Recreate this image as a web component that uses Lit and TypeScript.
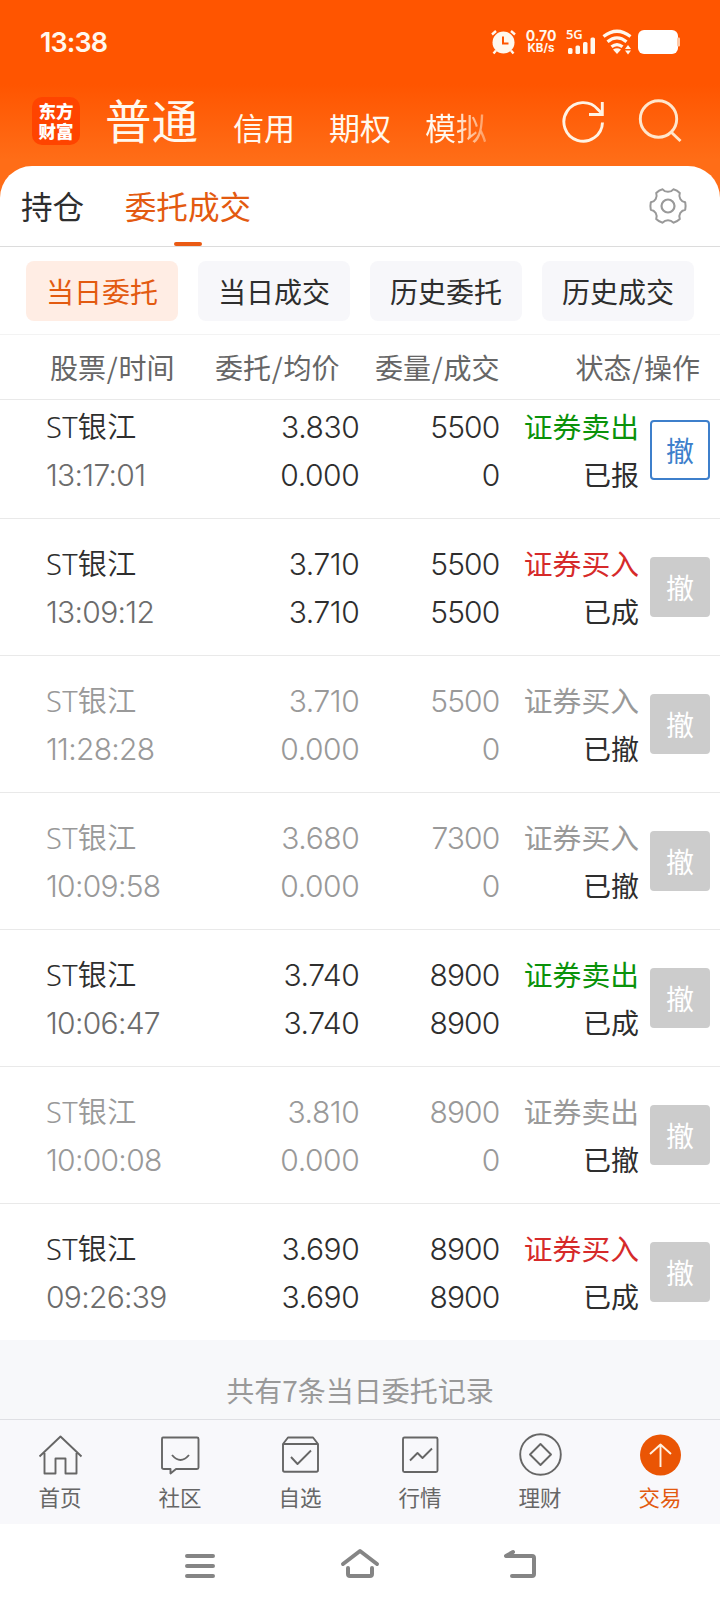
import { LitElement, html, css, svg } from "lit";
import { customElement, property } from "lit/decorators.js";
import { classMap } from "lit/directives/class-map.js";

interface Order {
  time: string;
  price: string;
  avg: string;
  qty: string;
  done: string;
  side: "buy" | "sell";
  status: string;
}

const ORDERS: Order[] = [
  { time: "13:17:01", price: "3.830", avg: "0.000", qty: "5500", done: "0", side: "sell", status: "已报" },
  { time: "13:09:12", price: "3.710", avg: "3.710", qty: "5500", done: "5500", side: "buy", status: "已成" },
  { time: "11:28:28", price: "3.710", avg: "0.000", qty: "5500", done: "0", side: "buy", status: "已撤" },
  { time: "10:09:58", price: "3.680", avg: "0.000", qty: "7300", done: "0", side: "buy", status: "已撤" },
  { time: "10:06:47", price: "3.740", avg: "3.740", qty: "8900", done: "8900", side: "sell", status: "已成" },
  { time: "10:00:08", price: "3.810", avg: "0.000", qty: "8900", done: "0", side: "sell", status: "已撤" },
  { time: "09:26:39", price: "3.690", avg: "3.690", qty: "8900", done: "8900", side: "buy", status: "已成" },
];

@customElement("status-bar")
class StatusBar extends LitElement {
  static styles = css`
    :host { display: flex; height: 84px; align-items: center; padding: 0 40px 0 40px; color: #fff8ee; box-sizing: border-box; }
    .clock { font: 600 27px/40px "Inter", sans-serif; letter-spacing: -0.9px; flex: 1; padding-top: 2px; }
    .icons { display: flex; align-items: center; }
    .speed { display: flex; flex-direction: column; align-items: center; width: 32px; margin: 0 9px 0 8px; font: 700 14px/13px "Inter", sans-serif; }
    .unit { font-size: 11.500px; }
    .cell { display: grid; width: 30px; height: 26px; margin-right: 6px; }
    .cell > * { grid-area: 1 / 1; }
    .gen { font: 600 13px/11px "Noto Sans", sans-serif; letter-spacing: -0.3px; }
    svg { display: block; }
    .wifi { margin-right: 6px; }
  `;
  render() {
    return html`
      <span class="clock">13:38</span>
      <div class="icons">
        <svg width="26" height="26" viewBox="0 0 26 26">
          <circle cx="12.500" cy="13.500" r="11" fill="#fff8ee" />
          <path d="M1 5.500 5 2M24 5.500 20 2M5 21.500 2.500 24.500M20 21.500 22.500 24.500" stroke="#fff8ee" stroke-width="2.400" fill="none" />
          <path d="M12 7.500V14.500H17.500" stroke="#ff5500" stroke-width="2" fill="none" />
        </svg>
        <div class="speed"><span>0.70</span><span class="unit">KB/s</span></div>
        <div class="cell">
          <span class="gen">5G</span>
          <svg width="30" height="26" viewBox="0 0 30 26" fill="#fff8ee">
            <rect x="2" y="19" width="4.500" height="6" rx="1.500" />
            <rect x="9.500" y="16.500" width="4.500" height="8.500" rx="1.500" />
            <rect x="17" y="13" width="4.500" height="12" rx="1.500" />
            <rect x="24.500" y="8.500" width="4.500" height="16.500" rx="1.500" />
          </svg>
        </div>
        <svg class="wifi" width="30" height="26" viewBox="0 0 30 26" fill="none" stroke="#fff8ee" stroke-width="3.200">
          <path d="M1.500 7.500Q15-3 28.500 7.500M5.500 12.800Q15 5 24.500 12.800M9.500 17.800Q15 13.500 20.500 17.800" />
          <path d="M11 20.500Q15 18 19 20.500L15 25Z" fill="#fff8ee" stroke="none" />
          <path d="M26 16 29 20H23ZM23 21.500H29L26 25.500Z" fill="#fff8ee" stroke="none" />
        </svg>
        <svg width="42" height="26" viewBox="0 0 42 26">
          <rect x="0" y="1" width="40" height="24" rx="6" fill="#fff" />
          <rect x="39" y="8.500" width="3" height="9" rx="1" fill="#ffc9a8" />
        </svg>
      </div>
    `;
  }
}

@customElement("account-bar")
class AccountBar extends LitElement {
  static styles = css`
    :host { display: flex; height: 82px; box-sizing: border-box; padding: 0 38.500px 0 32px; color: #fff8ee; }
    .logo { width: 48px; height: 48px; margin: 13px 25px 0 0; border-radius: 10px; background: #ff4400; display: grid; align-content: center; justify-items: center; font: 900 17.500px/20px "Noto Sans CJK SC", sans-serif; color: #fff; }
    .main { font: 400 46.500px/60px "Noto Sans CJK SC", sans-serif; width: 94px; margin: 5px 34px 0 0; }
    .accounts { display: flex; gap: 34px; flex: 1; font: 400 31px/44px "Noto Sans CJK SC", sans-serif; margin-top: 21px; }
    .accounts span { white-space: nowrap; }
    .fade { background: linear-gradient(90deg, #fff8ee 45%, #ff9a5c 100%); -webkit-background-clip: text; background-clip: text; color: transparent; }
    svg { flex: none; margin-top: 14px; }
    .refresh { margin-right: 32px; }
  `;
  render() {
    return html`
      <div class="logo"><span>东方</span><span>财富</span></div>
      <div class="main">普通</div>
      <div class="accounts"><span>信用</span><span>期权</span><span class="fade">模拟</span></div>
      <svg class="refresh" width="44" height="46" viewBox="0 0 44 46" fill="none" stroke="#fff3e4" stroke-width="2.900">
        <path d="M40.500 24.500A19.300 19.300 0 1 1 36 11.500L40 15.500" />
        <path d="M40.300 4V16.500H27" />
      </svg>
      <svg width="44" height="46" viewBox="0 0 44 46" fill="none" stroke="#ffe6cc" stroke-width="2.900">
        <circle cx="20.500" cy="21" r="18.200" /><path d="M33 34 42.500 43" />
      </svg>
    `;
  }
}

@customElement("order-row")
class OrderRow extends LitElement {
  @property({ attribute: false }) order!: Order;
  static styles = css`
    :host { display: block; }
    .row { display: grid; grid-template-columns: 200px 113px 140px 140px 71px; padding: 21px 10px 18px 46px; height: 137px; box-sizing: border-box; border-top: 1px solid #e9e9e9; color: #2e2e2e; font: 350 30px/48px "Inter", "Noto Sans CJK SC", sans-serif; }
    .col { display: flex; flex-direction: column; white-space: nowrap; }
    .name { font-size: 29px; font-family: "Noto Sans", "Noto Sans CJK SC", sans-serif; font-weight: 350; letter-spacing: 0.3px; }
    .num { text-align: right; letter-spacing: -0.9px; }
    .num span { margin-right: -0.4px; }
    .price { letter-spacing: -0.4px; }
    .act { text-align: right; font-weight: 400; font-size: 28.800px; padding-top: 1px; }
    .time { letter-spacing: -0.7px; color: #6c6c6c; }
    .status { font-size: 28px; color: #2e2e2e; }
    .sell { color: #0a920a; }
    .buy { color: #d62a2a; }
    .void .name, .void .num, .void .side, .void .time { color: #999; }
    .cancel { width: 60px; height: 60px; margin: 17px 0 0 11px; box-sizing: border-box; border-radius: 4px; background: #ccc; color: #fff; font-weight: 400; font-size: 28px; line-height: 64px; text-align: center; }
    .live { background: #fff; border: 2px solid #3d7fcb; color: #3d7fcb; line-height: 60px; }
  `;
  render() {
    const o = this.order;
    return html`
      <div class=${classMap({ row: true, void: o.status === "已撤" })}>
        <div class="col"><span class="name">ST银江</span><span class="time">${o.time}</span></div>
        <div class="col num price"><span>${o.price}</span><span>${o.avg}</span></div>
        <div class="col num"><span>${o.qty}</span><span>${o.done}</span></div>
        <div class="col act"><span class=${"side " + o.side}>${o.side === "buy" ? "证券买入" : "证券卖出"}</span><span class="status">${o.status}</span></div>
        <div class=${classMap({ cancel: true, live: o.status === "已报" })}>撤</div>
      </div>
    `;
  }
}

const TABS = [
  { label: "首页", icon: svg`<path d="M3.500 23.500 24.500 3.500 45.500 23.500M8.500 20V40.500H19.500V25.500H29.500V40.500H40.500V20" />` },
  { label: "社区", icon: svg`<path d="M7 4.500H41Q42.500 4.500 42.500 6V34.500Q42.500 36 41 36H20L14.500 40.500V36H8Q6 36 6 34.500V6Q6 4.500 7 4.500Z" /><path d="M16 22Q24.500 32 33 22" />` },
  { label: "自选", icon: svg`<path d="M7 11 12 4.500H37L42 11V37Q42 38.700 40.500 38.700H8.500Q7 38.700 7 37ZM7 11H42" /><path d="M15 24 21.500 31 35 17.500" />` },
  { label: "行情", icon: svg`<rect x="7" y="4.500" width="34.500" height="34.500" rx="1.500" /><path d="M14 27.500 21.500 20 26.500 25 36 15.500" />` },
  { label: "理财", icon: svg`<circle cx="24.500" cy="21.500" r="20.300" /><path d="M24.500 11 35 21.500 24.500 32 14 21.500Z" />` },
  { label: "交易", icon: svg`<circle cx="24.500" cy="22" r="20.500" fill="#ea5504" stroke="none" /><path d="M24.500 34V11.500M14 21 24.500 11.500 35 21" stroke="#fff0e0" />` },
];

@customElement("bottom-tabs")
class BottomTabs extends LitElement {
  static styles = css`
    :host { display: grid; grid-template-columns: repeat(6, 1fr); height: 105px; box-sizing: border-box; border-top: 1px solid #dfe0e4; background: #f8f8fb; }
    .tab { display: flex; flex-direction: column; align-items: center; padding-top: 13px; color: #666; font: 400 21.500px/30px "Noto Sans CJK SC", sans-serif; }
    .on { color: #e35a10; }
    svg { display: block; margin-bottom: 5px; }
  `;
  render() {
    return TABS.map(
      (t, i) => html`<div class=${classMap({ tab: true, on: i === 5 })}>
        <svg width="49" height="44" viewBox="0 0 49 44" fill="none" stroke="#666" stroke-width="1.900" stroke-linejoin="round">${t.icon}</svg>
        <span>${t.label}</span>
      </div>`
    );
  }
}

@customElement("app-root")
class AppRoot extends LitElement {
  static styles = css`
    :host { display: flex; flex-direction: column; width: 720px; height: 1608px; overflow: hidden; background: linear-gradient(180deg, #ff5500 0, #ff5500 84px, #ff6d17 160px, #ff6d17 220px); font-family: "Noto Sans CJK SC", sans-serif; color: #2e2e2e; }
    .panel { flex: 1; min-height: 0; display: flex; flex-direction: column; background: #fff; border-radius: 32px 32px 0 0; overflow: hidden; }
    .tabs { display: flex; flex: none; height: 81px; box-sizing: border-box; border-bottom: 1px solid #dcdcdc; padding: 0 32px 0 21px; font-size: 31.600px; line-height: 78px; }
    .tab { display: flex; flex-direction: column; align-items: center; height: 80px; }
    .tab + .tab { margin-left: 40.500px; color: #e35a10; }
    .tab span { height: 76px; }
    .bar { width: 28px; height: 4px; border-radius: 2px; background: #ea5a14; }
    .gear { margin: 17px 0 0 auto; }
    .chips { display: grid; flex: none; grid-template-columns: repeat(4, 152px); gap: 20px; padding: 14px 26px 13px; border-bottom: 1px solid #f3f3f3; }
    .chip { height: 60px; border-radius: 8px; background: #f7f7fa; text-align: center; font-size: 28px; line-height: 60px; }
    .chip.on { background: #ffede4; color: #e35a10; }
    .heads { display: grid; flex: none; grid-template-columns: 165px 160px 200px 1fr; height: 65px; box-sizing: border-box; border-bottom: 1px solid #e9e9e9; padding: 0 20px 0 50px; color: #666; font-size: 28px; line-height: 64px; white-space: nowrap; }
    .heads span:last-child { text-align: right; }
    .heads i { font-style: normal; margin: 0 0.800px; }
    .list { flex: none; height: 940px; overflow: hidden; display: flex; flex-direction: column; justify-content: flex-end; }
    .foot { flex: 1; background: #f7f8fa; text-align: center; color: #999; font-size: 28px; line-height: 101px; min-height: 0; overflow: hidden; }
    .nav { flex: none; height: 84px; background: #fff; display: flex; justify-content: center; gap: 120px; align-items: center; }
    .nav svg { display: block; }
  `;
  render() {
    const head = (a: string, b: string) => html`<span>${a}<i>/</i>${b}</span>`;
    return html`
      <status-bar></status-bar>
      <account-bar></account-bar>
      <div class="panel">
        <div class="tabs">
          <div class="tab"><span>持仓</span></div>
          <div class="tab"><span>委托成交</span><div class="bar"></div></div>
          <svg class="gear" width="40" height="46" viewBox="-20 -23 40 46" fill="none" stroke="#999" stroke-width="2" stroke-linejoin="round">
            <path d="M17.200-3.700Q18 0 17.200 3.700C12.800 4.500 10.300 8.800 11.800 13Q9.100 15.700 5.400 16.700C2.500 13.300-2.500 13.300-5.400 16.700Q-9.100 15.700-11.800 13C-10.300 8.800-12.800 4.500-17.200 3.700Q-18 0-17.200-3.700C-12.800-4.500-10.300-8.800-11.800-13Q-9.100-15.700-5.400-16.700C-2.500-13.300 2.500-13.300 5.400-16.700Q9.100-15.700 11.800-13C10.300-8.800 12.800-4.500 17.200-3.700Z" />
            <circle r="6.500" stroke-width="2.200" />
          </svg>
        </div>
        <div class="chips">
          ${["当日委托", "当日成交", "历史委托", "历史成交"].map((c, i) => html`<div class=${classMap({ chip: true, on: i === 0 })}>${c}</div>`)}
        </div>
        <div class="heads">${head("股票", "时间")}${head("委托", "均价")}${head("委量", "成交")}${head("状态", "操作")}</div>
        <div class="list">${ORDERS.map((o) => html`<order-row .order=${o}></order-row>`)}</div>
        <div class="foot">共有7条当日委托记录</div>
      </div>
      <bottom-tabs></bottom-tabs>
      <div class="nav">
        <svg width="40" height="40" viewBox="0 0 40 40" stroke="#858585" stroke-width="4" stroke-linecap="round"><path d="M7 10H33M7 20H33M7 30H33" /></svg>
        <svg width="40" height="40" viewBox="0 0 40 40" fill="none" stroke="#858585" stroke-width="4" stroke-linecap="round" stroke-linejoin="round"><path d="M3 18 20 5 37 18" /><path d="M8 22V28Q8 30 10 30H30Q32 30 32 28V22" /></svg>
        <svg width="40" height="40" viewBox="0 0 40 40" fill="none" stroke="#858585" stroke-width="4" stroke-linecap="round" stroke-linejoin="round"><path d="M13 6 6 10H32Q34 10 34 12V28Q34 30 32 30H12" /></svg>
      </div>
    `;
  }
}
